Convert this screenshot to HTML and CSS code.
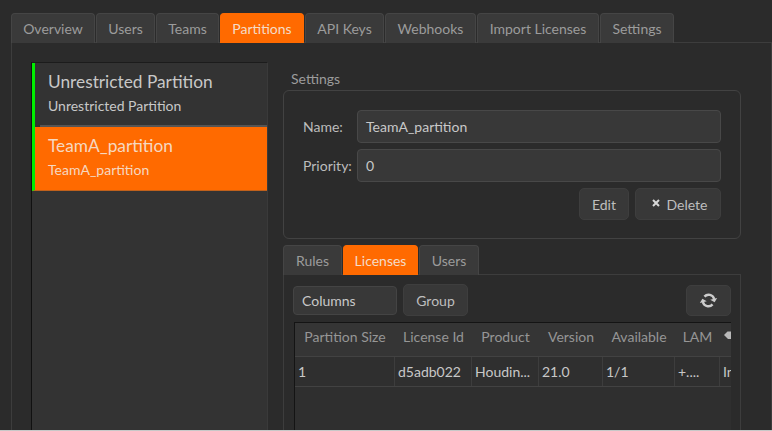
FILE: index.html
```html
<!DOCTYPE html>
<html lang="en">
<head>
<meta charset="utf-8">
<title>Partitions</title>
<link rel="stylesheet" href="styles.css">
</head>
<body>
<div class="app">
  <nav class="tabs main-tabs">
    <span class="tab w-overview">Overview</span>
    <span class="tab w-users">Users</span>
    <span class="tab w-teams">Teams</span>
    <span class="tab active w-partitions">Partitions</span>
    <span class="tab w-api">API Keys</span>
    <span class="tab w-webhooks">Webhooks</span>
    <span class="tab w-import">Import Licenses</span>
    <span class="tab w-settings">Settings</span>
  </nav>
  <main class="main-pane">
    <aside class="list">
      <div class="item">
        <div class="item-title">Unrestricted Partition</div>
        <div class="item-sub">Unrestricted Partition</div>
      </div>
      <div class="item selected">
        <div class="item-title">TeamA_partition</div>
        <div class="item-sub">TeamA_partition</div>
      </div>
    </aside>
    <section class="detail">
      <div class="group-label">Settings</div>
      <div class="group">
        <div class="form-row">
          <label class="form-label">Name:</label>
          <div class="input">TeamA_partition</div>
        </div>
        <div class="form-row">
          <label class="form-label">Priority:</label>
          <div class="input">0</div>
        </div>
        <div class="actions">
          <button class="btn btn-edit">Edit</button>
          <button class="btn btn-delete"><svg class="x-icon" viewBox="0 0 8 8" width="8" height="8"><path d="M1 1 L7 7 M7 1 L1 7" stroke="#d8d8d8" stroke-width="2"/></svg>Delete</button>
        </div>
      </div>
      <nav class="tabs sub-tabs">
        <span class="tab w-rules">Rules</span>
        <span class="tab active w-licenses">Licenses</span>
        <span class="tab w-subusers">Users</span>
      </nav>
      <div class="sub-pane">
        <div class="toolbar">
          <div class="select">Columns</div>
          <button class="btn btn-group">Group</button>
          <button class="btn btn-refresh"><svg class="sync-icon" viewBox="0 0 16 16" width="15" height="15"><path d="M2.2 6.6 A6 6 0 0 1 12.4 3.6" fill="none" stroke="#cccccc" stroke-width="2.6"/><path d="M14.6 1 L14.6 6.4 L9.2 6.4 Z" fill="#cccccc"/><path d="M13.8 9.4 A6 6 0 0 1 3.6 12.4" fill="none" stroke="#cccccc" stroke-width="2.6"/><path d="M1.4 15 L1.4 9.6 L6.8 9.6 Z" fill="#cccccc"/></svg></button>
        </div>
        <div class="table">
          <div class="thead">
            <div class="th">Partition Size</div>
            <div class="th">License Id</div>
            <div class="th">Product</div>
            <div class="th">Version</div>
            <div class="th">Available</div>
            <div class="th">LAM</div>
            <div class="th th-clip"><svg viewBox="0 0 8 8" width="8" height="8"><path d="M0 4 L3.5 0.5 L8 0.5 L8 8 L4 8 Z" fill="#b8b8b8"/></svg></div>
          </div>
          <div class="trow">
            <div class="td">1</div>
            <div class="td">d5adb022</div>
            <div class="td">Houdin...</div>
            <div class="td">21.0</div>
            <div class="td">1/1</div>
            <div class="td">+....</div>
            <div class="td td-clip">In</div>
          </div>
        </div>
      </div>
    </section>
  </main>
</div>
</body>
</html>
```

FILE: styles.css
```css
* { box-sizing: border-box; }
html, body { margin: 0; height: 431px; overflow: hidden; }
body {
  background: #2b2b2b;
  color: #c4c4c4;
  font-family: Lato, "Liberation Sans", sans-serif;
  font-size: 14px;
  border-bottom: 1px solid #c8c8c8;
}
.app {
  height: 430px;
  padding: 13px 0 0 11px;
  display: flex;
  flex-direction: column;
  overflow: hidden;
}

.tabs { display: flex; gap: 1px; position: relative; z-index: 1; }
.main-tabs { height: 30px; margin-bottom: -1px; }
.tab {
  display: flex;
  align-items: center;
  justify-content: center;
  height: 30px;
  background: #3a3a3a;
  color: #9c9c9c;
  border: 1px solid #454545;
  border-bottom: 0;
  border-radius: 4px 4px 0 0;
  flex: none;
}
.tab.active { background: #ff6a00; border-color: #ff6a00; color: #f4dcc8; }
.w-overview { width: 84px; }
.w-users { width: 59px; }
.w-teams { width: 63px; }
.w-partitions { width: 84px; }
.w-api { width: 79px; }
.w-webhooks { width: 91px; }
.w-import { width: 122px; }
.w-settings { width: 74px; }
.w-rules { width: 59px; }
.w-licenses { width: 75px; }
.w-subusers { width: 60px; }

.main-pane {
  flex: 1;
  min-height: 0;
  display: flex;
  gap: 15px;
  border: 1px solid #3d3d3d;
  border-bottom: 0;
  padding: 19px 30px 0 19px;
  overflow: hidden;
}
.list {
  width: 237px;
  flex: none;
  background: #333333;
  border-left: 1px solid #111;
  border-top: 1px solid #1c1c1c;
  border-right: 1px solid #3a3a3a;
  display: flex;
  flex-direction: column;
}
.item {
  height: 64px;
  border-left: 3px solid #00ee00;
  padding: 8px 0 0 13px;
  position: relative;
  color: #c8c8c8;
}
.item:first-child::after {
  content: "";
  position: absolute;
  left: 5px;
  right: 0;
  bottom: 0;
  height: 2px;
  background: #555555;
}
.item-title { font-size: 17.3px; line-height: 22px; }
.item-sub { font-size: 14px; line-height: 18px; margin-top: 4px; }
.item.selected {
  background: #ff6a00;
  color: #f6d8c0;
  border-bottom: 1px solid #c0611c;
}

.detail { flex: 1; min-width: 0; display: flex; flex-direction: column; }
.group-label { color: #9c9c9c; line-height: 17px; padding: 8px 0 0 8px; height: 28px; }
.group {
  height: 149px;
  flex: none;
  border: 1px solid #424242;
  border-radius: 6px;
  padding: 19px 19px 0 19px;
  display: flex;
  flex-direction: column;
  gap: 6px;
}
.form-row { display: flex; align-items: center; height: 33px; }
.form-label { width: 54px; flex: none; color: #bcbcbc; }
.input {
  flex: 1;
  height: 33px;
  background: #383838;
  border: 1px solid #484848;
  border-radius: 4px;
  padding-left: 8px;
  display: flex;
  align-items: center;
  color: #c8c8c8;
}
.actions { display: flex; justify-content: flex-end; gap: 6px; }
.btn {
  font: inherit;
  color: #bebebe;
  background: #383838;
  border: 1px solid #3e3e3e;
  border-radius: 5px;
  height: 32px;
  padding: 0;
  display: flex;
  align-items: center;
  justify-content: center;
}
.btn-edit { width: 50px; }
.btn-delete { width: 86px; gap: 7px; padding-left: 3px; }
.x-icon { margin-top: -2px; }

.sub-tabs { margin-top: 6px; margin-bottom: -1px; }
.sub-pane {
  flex: 1;
  min-height: 0;
  border: 1px solid #3d3d3d;
  border-bottom: 0;
  padding: 9px 9px 0 9px;
  overflow: hidden;
}
.toolbar { display: flex; align-items: center; gap: 6px; height: 32px; }
.select {
  width: 104px;
  height: 29px;
  background: #383838;
  border: 1px solid #444444;
  border-radius: 4px;
  padding-left: 8px;
  display: flex;
  align-items: center;
  color: #c8c8c8;
}
.btn-group { width: 65px; }
.btn-refresh { width: 45px; height: 31px; margin-left: auto; }
.sync-icon { transform: rotate(30deg); }

.table {
  margin: 6px 0 0 1px;
  height: 120px;
  background: #2f2f2f;
  border-top: 1px solid #141414;
  border-left: 1px solid #141414;
  overflow: hidden;
}
.thead, .trow {
  display: grid;
  grid-template-columns: 100px 77px 67px 64px 72px 45px 1fr;
}
.thead {
  height: 34px;
  background: #353535;
  border-bottom: 1px solid #424242;
}
.th {
  color: #969696;
  display: flex;
  align-items: center;
  justify-content: center;
  padding-bottom: 6px;
  white-space: nowrap;
}
.th-clip { justify-content: flex-start; padding-left: 4px; padding-bottom: 10px; }
.trow { height: 30px; border-bottom: 1px solid #424242; }
.td {
  display: flex;
  align-items: center;
  padding-left: 3px;
  border-right: 1px solid #3d3d3d;
  color: #c8c8c8;
  white-space: nowrap;
  overflow: hidden;
}
.td-clip { border-right: 0; }
```
